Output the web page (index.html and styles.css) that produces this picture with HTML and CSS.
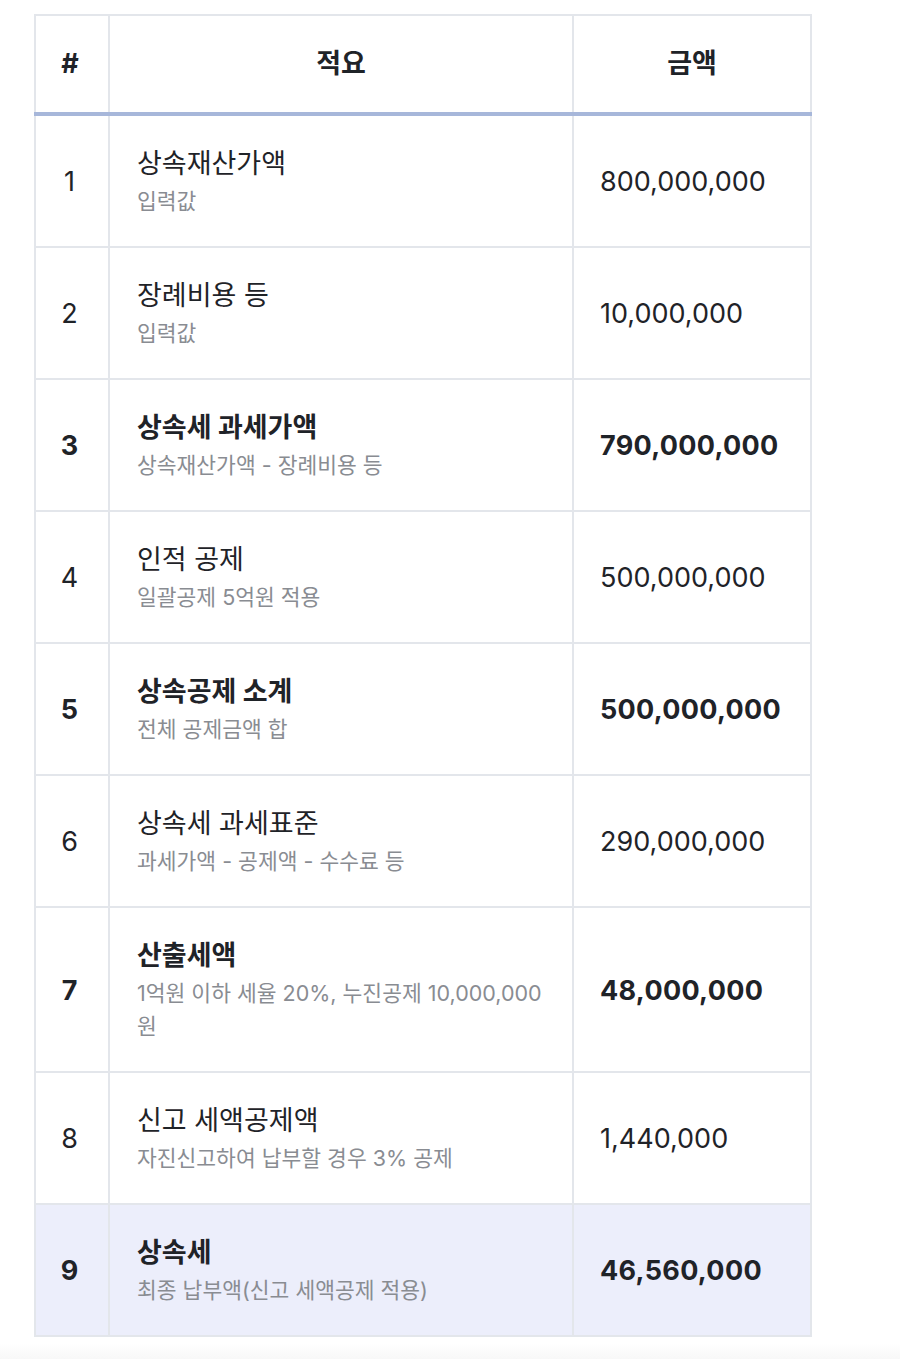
FILE: index.html
```html
<!DOCTYPE html>
<html lang="ko">
<head>
<meta charset="utf-8">
<title>상속세 계산</title>
<link rel="stylesheet" href="styles.css">
</head>
<body>
<div class="wrap">
<table class="calc">
  <colgroup>
    <col class="c-no">
    <col class="c-desc">
    <col class="c-amt">
  </colgroup>
  <thead>
    <tr>
      <th>#</th>
      <th>적요</th>
      <th>금액</th>
    </tr>
  </thead>
  <tbody>
    <tr>
      <td class="no">1</td>
      <td class="desc"><div class="title">상속재산가액</div><div class="sub">입력값</div></td>
      <td class="amt">800,000,000</td>
    </tr>
    <tr>
      <td class="no">2</td>
      <td class="desc"><div class="title">장례비용 등</div><div class="sub">입력값</div></td>
      <td class="amt">10,000,000</td>
    </tr>
    <tr class="strong">
      <td class="no">3</td>
      <td class="desc"><div class="title">상속세 과세가액</div><div class="sub">상속재산가액 - 장례비용 등</div></td>
      <td class="amt">790,000,000</td>
    </tr>
    <tr>
      <td class="no">4</td>
      <td class="desc"><div class="title">인적 공제</div><div class="sub">일괄공제 5억원 적용</div></td>
      <td class="amt">500,000,000</td>
    </tr>
    <tr class="strong">
      <td class="no">5</td>
      <td class="desc"><div class="title">상속공제 소계</div><div class="sub">전체 공제금액 합</div></td>
      <td class="amt">500,000,000</td>
    </tr>
    <tr>
      <td class="no">6</td>
      <td class="desc"><div class="title">상속세 과세표준</div><div class="sub">과세가액 - 공제액 - 수수료 등</div></td>
      <td class="amt">290,000,000</td>
    </tr>
    <tr class="strong">
      <td class="no">7</td>
      <td class="desc"><div class="title">산출세액</div><div class="sub">1억원 이하 세율 20%, 누진공제 10,000,000 원</div></td>
      <td class="amt">48,000,000</td>
    </tr>
    <tr>
      <td class="no">8</td>
      <td class="desc"><div class="title">신고 세액공제액</div><div class="sub">자진신고하여 납부할 경우 3% 공제</div></td>
      <td class="amt">1,440,000</td>
    </tr>
    <tr class="strong total">
      <td class="no">9</td>
      <td class="desc"><div class="title">상속세</div><div class="sub">최종 납부액(신고 세액공제 적용)</div></td>
      <td class="amt">46,560,000</td>
    </tr>
  </tbody>
</table>
</div>
<div class="fade"></div>
</body>
</html>
```

FILE: styles.css
```css
html, body {
  margin: 0;
  padding: 0;
  background: #ffffff;
}

body {
  font-family: "Inter", "Noto Sans CJK KR", sans-serif;
  color: #1f2328;
}

.wrap {
  padding: 14px 0 0 34px;
}

.calc {
  border-collapse: collapse;
  width: 776px;
  table-layout: fixed;
  border: 2px solid #e3e6eb;
}

.c-no { width: 74px; }
.c-desc { width: 464px; }
.c-amt { width: 238px; }

.calc th,
.calc td {
  border: 2px solid #e3e6eb;
  vertical-align: middle;
}

.calc th {
  font-size: 27px;
  font-weight: 700;
  line-height: 36px;
  padding: 30px 0;
  text-align: center;
  color: #1f2328;
  border-bottom: 4px solid #a7b7da;
}

.calc th:first-child {
  padding-right: 4px;
}

.calc td {
  padding: 30px 0 28px;
}

.no {
  text-align: center;
  font-size: 27px;
  line-height: 36px;
  padding-right: 5px !important;
}

.desc {
  padding-left: 27px !important;
  padding-right: 27px !important;
}

.title {
  font-size: 27px;
  line-height: 36px;
  color: #1f2328;
}

.sub {
  margin-top: 3px;
  font-size: 21.5px;
  line-height: 33px;
  color: #898c92;
}

.amt {
  padding-left: 26px !important;
  font-size: 27px;
  line-height: 36px;
  color: #1f2328;
}

.strong .no,
.strong .title,
.strong .amt {
  font-weight: 700;
}

.strong .amt {
  letter-spacing: 0.3px;
}

.total td {
  background: #eceefb;
}

.fade {
  height: 22px;
  margin-top: 6px;
  background: linear-gradient(#ffffff, #f5f5f5);
}
```
